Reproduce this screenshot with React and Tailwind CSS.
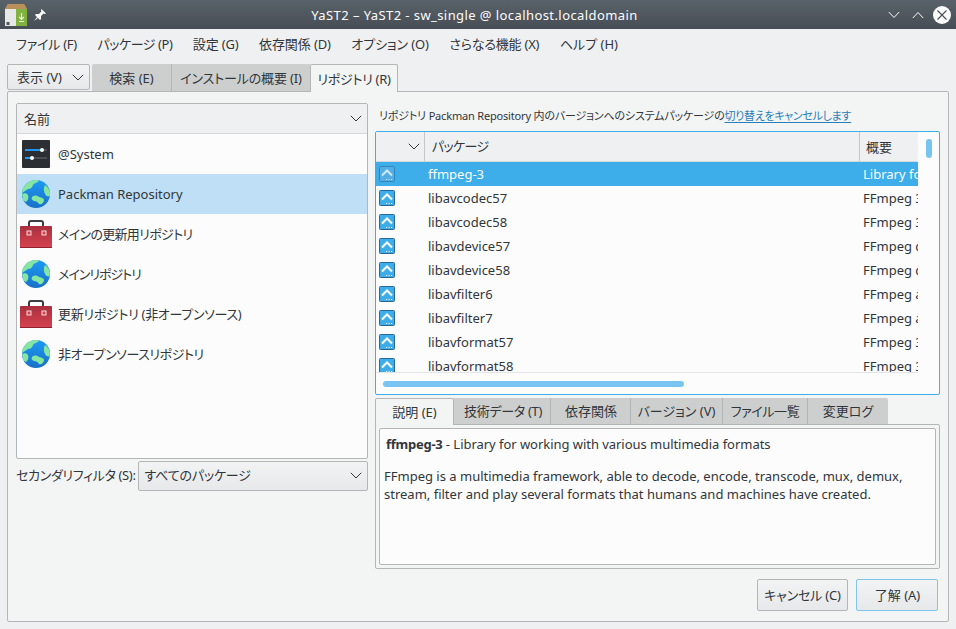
import React from "react";

const F = { fontFamily: '"Noto Sans", "Noto Sans CJK JP", sans-serif' };

const Chevron = ({ className = "" }) => (
  <svg width="12" height="7" viewBox="0 0 12 7" className={className} fill="none" stroke="#31363b" strokeWidth="1">
    <path d="M0.8 0.8 L6 6 L11.2 0.8" />
  </svg>
);

const Globe = ({ id }) => (
  <svg width="28" height="28" viewBox="0 0 28 28">
    <defs>
      <linearGradient id={id} x1="0" y1="0" x2="0" y2="1">
        <stop offset="0" stopColor="#1d99f3" />
        <stop offset="1" stopColor="#1a70c8" />
      </linearGradient>
      <clipPath id={id + "c"}><circle cx="14" cy="14" r="14" /></clipPath>
    </defs>
    <circle cx="14" cy="14" r="14" fill={"url(#" + id + ")"} />
    <g clipPath={"url(#" + id + "c)"} fill="#84e6a0">
      <path d="M5 3 C9 -1 15 -1 17 1 C15 3 12 3 11 5 C10 8 8 9 6 9 C4 10 2 12 0 13 L0 9 Z" />
      <path d="M0 14 C2 13 5 13 6 15 C7 18 6 20 4 22 L1 20 Z" />
      <path d="M10 17 C12 15 15 15 17 17 C20 18 22 18 22 20 C22 23 19 25 17 24 C16 22 14 21 12 21 C10 20 9 19 10 17 Z" />
      <path d="M23 5 C26 7 29 11 28 16 C26 17 24 16 23 14 C22 11 21 9 23 5 Z" />
    </g>
  </svg>
);

const Toolbox = ({ id }) => (
  <svg width="32" height="28" viewBox="0 0 32 28">
    <defs>
      <linearGradient id={id} x1="0" y1="0" x2="0" y2="1">
        <stop offset="0" stopColor="#a9303f" />
        <stop offset="1" stopColor="#d6424f" />
      </linearGradient>
    </defs>
    <path d="M9 7 V3 Q9 1 11 1 H21 Q23 1 23 3 V7" fill="none" stroke="#3b3f44" strokeWidth="2" />
    <rect x="0" y="6" width="32" height="22" rx="1" fill={"url(#" + id + ")"} />
    <rect x="0" y="27" width="32" height="1" fill="#8e2230" />
    <rect x="7" y="11" width="4" height="4" fill="#d6424f" stroke="#f3dcdc" strokeWidth="1" />
    <rect x="22" y="11" width="4" height="4" fill="#d6424f" stroke="#f3dcdc" strokeWidth="1" />
  </svg>
);

const Sliders = () => (
  <svg width="28" height="28" viewBox="0 0 28 28">
    <rect width="28" height="28" rx="1" fill="#2b2e32" />
    <rect x="3" y="9" width="22" height="2" fill="#4a4e52" />
    <rect x="3" y="9" width="17" height="2" fill="#1d99f3" />
    <circle cx="20" cy="10" r="2" fill="#fff" />
    <rect x="3" y="17" width="22" height="2" fill="#4a4e52" />
    <rect x="3" y="17" width="7" height="2" fill="#1d99f3" />
    <circle cx="10" cy="18" r="2" fill="#fff" />
  </svg>
);

const PkgIcon = ({ faded }) => (
  <svg width="16" height="16" viewBox="0 0 16 16" className="block">
    <rect x="0.5" y="0.5" width="15" height="15" rx="1" fill={faded ? "#54aee6" : "#3daee9"} stroke={faded ? "#2f86bd" : "#24699a"} />
    <path d="M3 9.5 L8 4.5 L13 9.5" fill="none" stroke={faded ? "#cfe9f8" : "#fff"} strokeWidth="2" />
    <path d="M7 13.5 H8 M9.5 13.5 H10.5 M12 13.5 H13" stroke={faded ? "#cfe9f8" : "#fff"} strokeWidth="1.2" />
  </svg>
);

const AppIcon = () => (
  <svg width="24" height="24" viewBox="0 0 24 24">
    <path d="M1 6 L4 1 H20 L23 6 V23 H1 Z" fill="#c9a06a" />
    <path d="M4 1 H20 L23 6 H1 Z" fill="#b98f5a" />
    <rect x="1" y="6" width="11" height="17" fill="#e6e8e8" />
    <rect x="12" y="6" width="11" height="17" fill="#7fb23f" />
    <path d="M17.5 10 V16 M15 14 L17.5 16.5 L20 14 M15 18.5 H20" stroke="#e6f2d4" strokeWidth="1.2" fill="none" />
    <rect x="2.5" y="19" width="3" height="3" fill="#555" />
  </svg>
);

const Pin = () => (
  <svg width="14" height="14" viewBox="0 0 14 14" fill="#fcfcfc">
    <path d="M8.5 1 L13 5.5 L11.8 6 L10.5 5.6 L8 8 L8 11 L7 12 L2 7 L3 6 L6 6 L8.4 3.5 L8 2.2 Z" />
    <path d="M4 9 L1 13 L5 10 Z" />
  </svg>
);

const menus = [
  ["ファイル (F)", "tracking-[-0.25px]"],
  ["パッケージ (P)", "tracking-[-0.45px]"],
  ["設定 (G)", "tracking-[-0.15px]"],
  ["依存関係 (D)", "tracking-[-0.12px]"],
  ["オプション (O)", "tracking-[-0.12px]"],
  ["さらなる機能 (X)", "tracking-[-0.2px]"],
  ["ヘルプ (H)", ""],
];

const repos = [
  { n: "@System", i: <Sliders /> },
  { n: "Packman Repository", i: <Globe id="g1" />, sel: true },
  { n: "メインの更新用リポジトリ", i: <Toolbox id="t1" />, t: "tracking-[-0.67px]" },
  { n: "メインリポジトリ", i: <Globe id="g2" />, t: "tracking-[-1px]" },
  { n: "更新リポジトリ (非オープンソース)", i: <Toolbox id="t2" />, t: "tracking-[-0.3px]" },
  { n: "非オープンソースリポジトリ", i: <Globe id="g3" />, t: "tracking-[-0.46px]" },
];

const pkgs = [
  ["ffmpeg-3", "Library for working"],
  ["libavcodec57", "FFmpeg 3 codec library"],
  ["libavcodec58", "FFmpeg 3 codec library"],
  ["libavdevice57", "FFmpeg device library"],
  ["libavdevice58", "FFmpeg device library"],
  ["libavfilter6", "FFmpeg audio filter"],
  ["libavfilter7", "FFmpeg audio filter"],
  ["libavformat57", "FFmpeg 3 format"],
  ["libavformat58", "FFmpeg 3 format"],
];

const detailTabs = [
  ["説明 (E)", "w-[79px]"],
  ["技術データ (T)", "w-[97px] tracking-[-0.3px] pl-[2px]"],
  ["依存関係", "w-[80px] pl-[1px]"],
  ["バージョン (V)", "w-[92px]"],
  ["ファイル一覧", "w-[85px] tracking-[-0.4px]"],
  ["変更ログ", "w-[80px]"],
];

export default function App() {
  return (
    <div style={F} className="w-[956px] h-[629px] bg-[#eff0f1] text-[13px] leading-[18px] text-[#31363b] overflow-hidden flex flex-col [font-feature-settings:'palt']">
      {/* title bar */}
      <div className="h-[29px] shrink-0 bg-gradient-to-b from-[#59626a] to-[#474d54] flex items-center pl-[4px] pr-[5px] text-[#fcfcfc]">
        <AppIcon />
        <div className="ml-[5px]"><Pin /></div>
        <div className="flex-1 text-center text-[13px] tracking-[0.42px] pl-[14px]">YaST2 – YaST2 - sw_single @ localhost.localdomain</div>
        <svg width="12" height="8" viewBox="0 0 12 8" fill="none" stroke="#fcfcfc" strokeWidth="1"><path d="M0.8 1 L6 6.5 L11.2 1" /></svg>
        <svg width="12" height="8" viewBox="0 0 12 8" fill="none" stroke="#fcfcfc" strokeWidth="1" className="ml-[12px]"><path d="M0.8 7 L6 1.5 L11.2 7" /></svg>
        <div className="ml-[9px] w-[18px] h-[18px] rounded-full bg-[#fcfcfc] flex items-center justify-center">
          <svg width="10" height="10" viewBox="0 0 10 10" stroke="#474d54" strokeWidth="1.1"><path d="M0.5 0.5 L9.5 9.5 M9.5 0.5 L0.5 9.5" /></svg>
        </div>
      </div>

      {/* menu */}
      <div className="h-[33px] shrink-0 flex items-center pl-[16px] gap-[20.5px] pb-[3px]">
        {menus.map(([m, t]) => <span key={m} className={"whitespace-nowrap " + t}>{m}</span>)}
      </div>

      {/* main */}
      <div className="flex-1 flex flex-col px-[7px] pt-[2px] pb-[7px] min-h-0">
        <div className="flex h-[28px] shrink-0 relative z-10">
          <div className="w-[83px] h-[26px] rounded-[2px] border border-[#b3b5b6] bg-gradient-to-b from-[#f2f3f3] to-[#e7e8ea] flex items-center justify-between pl-[9px] pr-[5px]">
            <span>表示 (V)</span><Chevron />
          </div>
          <div className="w-[80px] ml-[2px] h-[27px] bg-[#cdcfcf] border-r border-[#b3b5b6] flex items-center justify-center rounded-tl-[2px]">検索 (E)</div>
          <div className="w-[138px] h-[27px] bg-[#cdcfcf] flex items-center justify-center tracking-[-0.15px]">インストールの概要 (I)</div>
          <div className="w-[88px] h-[28px] bg-[#f3f4f4] border border-b-0 border-[#b3b5b6] rounded-t-[2px] flex items-center justify-center tracking-[-0.3px]">リポジトリ (R)</div>
        </div>

        <div className="flex-1 -mt-px bg-[#f3f4f4] border border-[#b3b5b6] rounded-[2px] flex pl-[8px] pr-[7px] pt-[11px] min-h-0">
          {/* left */}
          <div className="w-[352px] shrink-0 flex flex-col">
            <div className="h-[356px] border border-[#b3b5b6] rounded-[2px] bg-[#fcfcfc] flex flex-col overflow-hidden">
              <div className="h-[30px] shrink-0 bg-[#eff0f1] border-b border-[#d5d6d7] flex items-center justify-between pl-[7px] pr-[5px]">
                <span>名前</span><Chevron />
              </div>
              <div>
                {repos.map((r) => (
                  <div key={r.n} className={"h-[40px] flex items-center " + (r.sel ? "bg-[#bedff5]" : "")}>
                    <div className="w-[41px] pr-[3px] flex justify-center shrink-0">{r.i}</div>
                    <span className={"whitespace-nowrap " + (r.t || "")}>{r.n}</span>
                  </div>
                ))}
              </div>
            </div>
            <div className="flex items-center mt-[2px] h-[30px]">
              <span className="whitespace-nowrap tracking-[-0.35px] pb-[3px]">セカンダリフィルタ (S):</span>
              <div className="ml-[2px] flex-1 h-[30px] rounded-[2px] border border-[#b3b5b6] bg-gradient-to-b from-[#f2f3f3] to-[#e7e8ea] flex items-center justify-between pl-[6px] pr-[5px] pb-[1px]">
                <span className="tracking-[-0.2px] pb-[1px]">すべてのパッケージ</span><Chevron />
              </div>
            </div>
          </div>

          {/* right */}
          <div className="w-[565px] ml-[7px] shrink-0 flex flex-col">
            <div className="h-[28px] shrink-0 flex items-center pl-[4px] pb-[2px] text-[11px] whitespace-nowrap tracking-[-0.18px]">
              リポジトリ Packman Repository 内のバージョンへのシステムパッケージの
              <span className="text-[#2980b9] underline underline-offset-2 tracking-[-0.3px]">切り替えをキャンセルします</span>
            </div>
            {/* tree */}
            <div className="h-[264px] shrink-0 border border-[#3daee9] rounded-[2px] bg-[#fcfcfc] flex overflow-hidden">
              <div className="w-[542px] shrink-0 flex flex-col">
                <div className="h-[241px] overflow-hidden border-b border-[#e3e4e5]">
                  <div className="h-[30px] bg-[#eff0f1] border-b border-[#d5d6d7] flex">
                    <div className="w-[49px] border-r border-[#c4c6c7] flex items-center justify-end pr-[4px]"><Chevron /></div>
                    <div className="w-[435px] border-r border-[#c4c6c7] flex items-center pl-[7px] pb-[1px] tracking-[-0.7px]">パッケージ</div>
                    <div className="flex-1 flex items-center pl-[6px]">概要</div>
                  </div>
                  {pkgs.map(([n, s], i) => (
                    <div key={n} className={"h-[24px] flex items-center " + (i === 0 ? "bg-[#3daee9] text-[#fcfcfc]" : "")}>
                      <div className="w-[49px] pl-[3px] shrink-0"><PkgIcon faded={i === 0} /></div>
                      <div className="w-[435px] pl-[3px] shrink-0 whitespace-nowrap">{n}</div>
                      <div className="flex-1 pl-[3px] overflow-hidden whitespace-nowrap">{s}</div>
                    </div>
                  ))}
                </div>
                <div className="flex-1 flex items-center pl-[7px]">
                  <div className="w-[301px] h-[6px] rounded-full bg-[#76c4ef]" />
                </div>
              </div>
              <div className="flex-1 pl-[8px] pt-[7px]">
                <div className="w-[6px] h-[19px] rounded-full bg-[#76c4ef]" />
              </div>
            </div>
            {/* detail tabs */}
            <div className="flex h-[26px] mt-[3px] shrink-0 relative z-10">
              {detailTabs.map(([t, w], i) => (
                <div key={t} className={"flex items-center justify-center whitespace-nowrap " + w + " " + (i === 0
                  ? "bg-[#f3f4f4] border border-b-0 border-[#b3b5b6] rounded-t-[2px] h-[27px]"
                  : "bg-[#cdcfcf] h-[26px] border-r border-[#b3b5b6] " + (i === 5 ? "border-r-0 rounded-tr-[2px]" : ""))}>
                  {t}
                </div>
              ))}
            </div>
            <div className="h-[145px] shrink-0 border border-[#b3b5b6] rounded-[2px] p-[3px] bg-[#f3f4f4]">
              <div className="h-full border border-[#b3b5b6] rounded-[2px] bg-[#fcfcfc] pl-[4px] pt-[6px]">
                <div className="pl-[2px] tracking-[-0.04px]"><b className="font-bold tracking-[-0.25px]">ffmpeg-3</b> - Library for working with various multimedia formats</div>
                <div className="mt-[14px]">FFmpeg is a multimedia framework, able to decode, encode, transcode, mux, demux,<br />stream, filter and play several formats that humans and machines have created.</div>
              </div>
            </div>
            {/* buttons */}
            <div className="flex justify-end gap-[8px] mt-[10px] pr-[2px]">
              <div className="w-[91px] h-[32px] rounded-[2px] border border-[#b3b5b6] bg-gradient-to-b from-[#f2f3f3] to-[#e7e8ea] flex items-center justify-center whitespace-nowrap tracking-[-0.2px]">キャンセル (C)</div>
              <div className="w-[82px] h-[32px] rounded-[2px] border border-[#7ec6ee] bg-gradient-to-b from-[#f2f3f3] to-[#e7e8ea] flex items-center justify-center whitespace-nowrap pl-[1px]">了解 (A)</div>
            </div>
          </div>
        </div>
      </div>
    </div>
  );
}
